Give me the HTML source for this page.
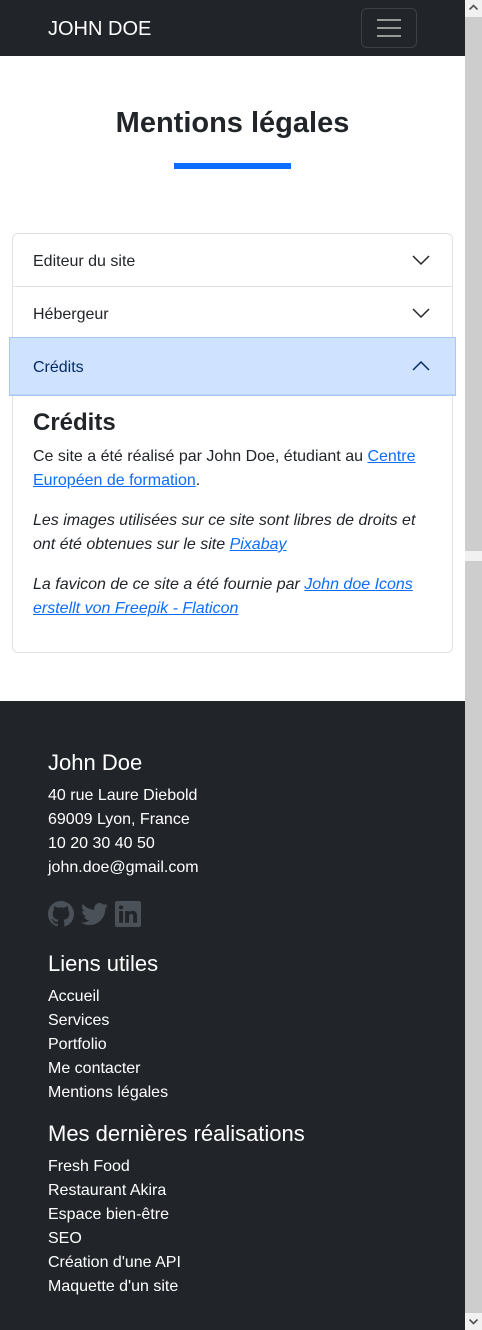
<!DOCTYPE html>
<html><head><meta charset="utf-8"><style>
*{box-sizing:border-box;margin:0;padding:0}
body{width:482px;height:1330px;position:relative;overflow:hidden;font-family:"Liberation Sans",Arial,sans-serif;color:#212529;background:#fff;font-size:16px}
.a{position:absolute;white-space:nowrap}
a{color:#0d6efd;text-decoration:underline}
.nav{position:absolute;left:0;top:0;width:465px;height:56px;background:#212529}
.foot{position:absolute;left:0;top:701px;width:465px;height:629px;background:#212529;color:#fff}
.foot .a{line-height:24px}
.sb{position:absolute;left:465px;top:0;width:17px;height:1330px;background:#f1f1f1}
</style></head><body>
<div class="nav">
<div class="a" style="left:48px;top:17px;font-size:20px;color:#fff;line-height:24px">JOHN DOE</div>
<div class="a" style="left:361px;top:8px;width:56px;height:40px;border:1px solid rgba(255,255,255,.12);border-radius:6px"></div>
<div class="a" style="left:377px;top:19px;width:24px;height:2px;background:#999"></div>
<div class="a" style="left:377px;top:27px;width:24px;height:2px;background:#999"></div>
<div class="a" style="left:377px;top:35px;width:24px;height:2px;background:#999"></div>
</div>
<div class="a" style="left:0;width:465px;top:105px;text-align:center;font-size:29px;font-weight:bold;line-height:36px">Mentions légales</div>
<div class="a" style="left:174px;top:163px;width:117px;height:6px;background:#0d6efd"></div>

<div class="a" style="left:12px;top:233px;width:441px;height:420px;border:1px solid #dee2e6;border-radius:6px"></div>
<div class="a" style="left:13px;top:286px;width:439px;height:1px;background:#dee2e6"></div>
<div class="a" style="left:33px;top:252px;line-height:20px">Editeur du site</div>
<div class="a" style="left:33px;top:305px;line-height:20px">Hébergeur</div>
<svg class="a" style="left:412px;top:253px" width="18" height="14"><path d="M1 3l8 8 8-8" fill="none" stroke="#212529" stroke-width="1.5"/></svg>
<svg class="a" style="left:412px;top:306px" width="18" height="14"><path d="M1 3l8 8 8-8" fill="none" stroke="#212529" stroke-width="1.5"/></svg>
<div class="a" style="left:9px;top:337px;width:447px;height:59px;background:#cfe2ff;border:1px solid #a7c7f5;box-shadow:inset 0 -1px 0 #bcd3f5"></div>
<div class="a" style="left:33px;top:358px;line-height:20px;color:#052c65">Crédits</div>
<svg class="a" style="left:412px;top:359px" width="18" height="14"><path d="M1 11l8-8 8 8" fill="none" stroke="#052c65" stroke-width="1.5"/></svg>
<div class="a" style="left:33px;top:408px;font-size:24px;font-weight:bold;line-height:29px">Crédits</div>
<div class="a" style="left:33px;top:445px;line-height:24px">Ce site a été réalisé par John Doe, étudiant au <a>Centre</a><br><a>Européen de formation</a>.</div>
<div class="a" style="left:33px;top:509px;line-height:24px;font-style:italic">Les images utilisées sur ce site sont libres de droits et<br>ont été obtenues sur le site <a>Pixabay</a></div>
<div class="a" style="left:33px;top:573px;line-height:24px;font-style:italic">La favicon de ce site a été fournie par <a>John doe Icons</a><br><a>erstellt von Freepik - Flaticon</a></div>

<div class="foot">
<div class="a" style="left:48px;top:50px;font-size:22px">John Doe</div>
<div class="a" style="left:48px;top:83px">40 rue Laure Diebold<br>69009 Lyon, France<br>10 20 30 40 50<br>john.doe@gmail.com</div>
<svg class="a" style="left:48px;top:200px" width="26" height="26" viewBox="0 0 16 16"><path fill="#4b5158" d="M8 0C3.58 0 0 3.580 0 8c0 3.54 2.290 6.53 5.47 7.59.4.07.55-.17.55-.38v-1.33c-2.23.48-2.7-1.07-2.7-1.07-.36-.92-.89-1.17-.89-1.17-.73-.5.06-.49.06-.49.8.06 1.23.83 1.23.83.71 1.22 1.87.87 2.33.66.07-.52.28-.87.51-1.07-1.78-.2-3.640-.89-3.64-3.95 0-.87.31-1.59.82-2.15-.08-.2-.36-1.02.08-2.12 0 0 .67-.21 2.2.82a7.6 7.6 0 014 0c1.53-1.04 2.2-.82 2.2-.82.44 1.1.16 1.92.08 2.12.51.56.82 1.27.82 2.15 0 3.07-1.87 3.75-3.65 3.95.29.25.54.73.54 1.48v2.2c0 .21.15.46.55.38A8 8 0 0016 8c0-4.42-3.58-8-8-8z"/></svg>
<svg class="a" style="left:81px;top:201px" width="27" height="24" viewBox="0 0 16 14"><path fill="#4b5158" d="M5.03 13.5c6.04 0 9.34-5 9.34-9.34v-.42A6.7 6.7 0 0016 2.04a6.6 6.6 0 01-1.89.52A3.3 3.3 0 0015.56.75a6.6 6.6 0 01-2.09.8A3.28 3.28 0 007.88 4.53 9.32 9.32 0 011.11 1.1a3.28 3.28 0 001.02 4.38A3.3 3.3 0 01.64 5.07v.04a3.28 3.28 0 002.63 3.22 3.3 3.3 0 01-1.48.06 3.28 3.28 0 003.07 2.28A6.58 6.58 0 010 12.03a9.29 9.29 0 005.03 1.47"/></svg>
<svg class="a" style="left:115px;top:200px" width="26" height="26" viewBox="0 0 16 16"><path fill="#4b5158" d="M0 1.15C0 .52.53 0 1.18 0h13.64C15.47 0 16 .52 16 1.15v13.7c0 .63-.53 1.15-1.18 1.15H1.18C.53 16 0 15.48 0 14.85zm4.94 12.25V6.18H2.54v7.22zM3.74 5.2c.84 0 1.36-.55 1.36-1.25-.02-.71-.52-1.25-1.340-1.25S2.4 3.24 2.4 3.95c0 .7.52 1.25 1.33 1.25zm4.91 8.2V9.37c0-.22.02-.43.08-.59.17-.43.57-.88 1.23-.88.87 0 1.21.66 1.21 1.63v3.87h2.4V9.26c0-2.22-1.18-3.25-2.76-3.25-1.27 0-1.84.7-2.160 1.19V6.18h-2.4c.03.68 0 7.22 0 7.22z"/></svg>
<div class="a" style="left:48px;top:251px;font-size:22px">Liens utiles</div>
<div class="a" style="left:48px;top:284px">Accueil<br>Services<br>Portfolio<br>Me contacter<br>Mentions légales</div>
<div class="a" style="left:48px;top:421px;font-size:22px">Mes dernières réalisations</div>
<div class="a" style="left:48px;top:454px">Fresh Food<br>Restaurant Akira<br>Espace bien-être<br>SEO<br>Création d'une API<br>Maquette d'un site</div>
</div>

<div class="sb">
<div class="a" style="left:0;top:17px;width:17px;height:534px;background:#cdcdcd"></div>
<div class="a" style="left:0;top:561px;width:17px;height:752px;background:#cdcdcd"></div>
<svg class="a" style="left:4px;top:4px" width="9" height="6"><path d="M0.5 5.5L4.5 1.5 8.5 5.5" fill="none" stroke="#505050" stroke-width="1.6"/></svg>
<svg class="a" style="left:4px;top:1319px" width="9" height="6"><path d="M0.5 0.5L4.5 4.5 8.5 0.5" fill="none" stroke="#505050" stroke-width="1.6"/></svg>
</div>
</body></html>
